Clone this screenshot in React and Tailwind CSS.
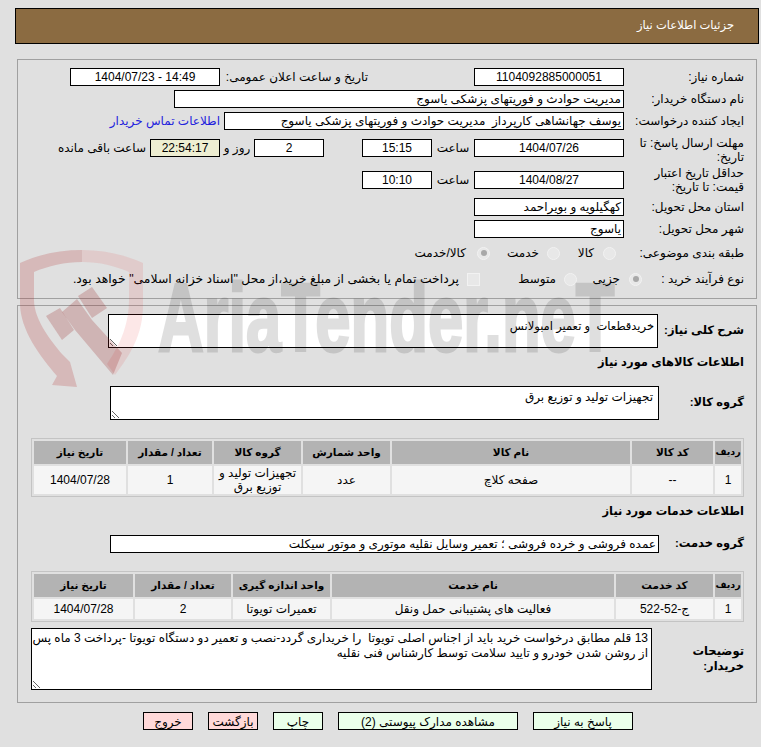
const box = 'h-[18px] border border-black shrink-0 flex items-center';

function Field({ w, children, center, bg = 'bg-white' }) {
  return (
    <div className={`${box} ${w} ${bg} ${center ? 'justify-center' : 'pr-[2px]'} overflow-hidden whitespace-pre`}>
      {children}
    </div>
  );
}

function Radio({ checked }) {
  return (
    <span className="w-[13px] h-[13px] rounded-full bg-[#e8e8e8] border border-[#f2f2f2] shrink-0 flex items-center justify-center">
      {checked && <span className="w-[6px] h-[6px] rounded-full bg-[#a8a8a8]" />}
    </span>
  );
}

function DataTable({ cols, head, row, rowH }) {
  return (
    <table className="table-fixed border-separate [border-spacing:2px] border border-[#c4c4c4] w-[713px] text-center">
      <colgroup>
        {cols.map((c, i) => (
          <col key={i} style={{ width: c }} />
        ))}
      </colgroup>
      <thead>
        <tr className="h-[23px] bg-[#b3b3b3]">
          {head.map((h) => (
            <th key={h} className="p-0 font-bold text-[10.5px] first:text-[9.5px]">{h}</th>
          ))}
        </tr>
      </thead>
      <tbody>
        <tr className={`${rowH} bg-[#f5f5f5]`}>
          {row.map((c, i) => (
            <td key={i} className="p-0 leading-[14px]">{c}</td>
          ))}
        </tr>
      </tbody>
    </table>
  );
}

function Watermark() {
  return (
    <div className="absolute inset-0 pointer-events-none overflow-hidden">
      <svg className="absolute left-0 top-0" width="761" height="747">
        <path
          fill="#b02020"
          fillOpacity="0.2"
          d="M20,263 C40,254 60,250 82,250 L82,262 C65,262 48,266 34,272 L34,300 C34,320 52,342 62,354 L70,362 L77,387 L52,385 L57,376 C40,356 20,330 20,303 Z"
        />
        <path
          fill="#e02020"
          fillOpacity="0.11"
          d="M82,250 C105,250 125,255 143,263 L143,305 C143,335 130,355 115,375 L107,364 C122,342 129,322 129,300 L129,272 C115,266 100,262 82,262 Z"
        />
        <path fill="#901818" fillOpacity="0.22" d="M46,316 L60,308 L74,330 L62,340 Z" />
        <path fill="#901818" fillOpacity="0.22" d="M62,312 L77,299 L92,320 L122,353 L113,375 L75,330 Z" />
        <path fill="#901818" fillOpacity="0.22" d="M78,296 L92,287 L107,308 L92,318 Z" />
      </svg>
      <div className="absolute left-[158px] top-[263px] opacity-[0.12] text-black font-bold text-[96px] leading-[110px] origin-left scale-x-[0.66] whitespace-nowrap [-webkit-text-stroke:3px_black] [font-family:'Liberation_Sans',sans-serif]" dir="ltr">
        AriaTender.neT
      </div>
    </div>
  );
}

export default function App() {
  return (
    <div
      dir="rtl"
      className="relative w-[761px] h-[747px] bg-[#e0e0e0] text-[12px] text-black overflow-hidden [font-family:'Liberation_Sans','DejaVu_Sans',sans-serif]"
    >
      <div className="pt-[8px] pr-[2px] pl-[15px]">
        <div className="h-[36px] border border-black bg-[#8b6b41] text-white flex items-center pr-[24px] text-[11.5px]">
          جزئیات اطلاعات نیاز
        </div>
      </div>

      {/* بخش بالا */}
      <div className="mt-[15px] mr-[4px] ml-[17px] h-[240px] border border-[#a0a0a0] pt-[8px] pr-[12px] flex flex-col">
        <div className="flex items-center h-[18px]">
          <div className="w-[120px] shrink-0">شماره نیاز:</div>
          <Field w="w-[150px]" center>1104092885000051</Field>
          <div className="w-[106px] shrink-0" />
          <div className="w-[148px] shrink-0">تاریخ و ساعت اعلان عمومی:</div>
          <Field w="w-[150px]" center><span dir="ltr">1404/07/23 - 14:49</span></Field>
        </div>
        <div className="flex items-center h-[18px] mt-[4px]">
          <div className="w-[120px] shrink-0">نام دستگاه خریدار:</div>
          <Field w="w-[450px]">مدیریت حوادث و فوریتهای پزشکی یاسوج</Field>
        </div>
        <div className="flex items-center h-[18px] mt-[4px]">
          <div className="w-[120px] shrink-0">ایجاد کننده درخواست:</div>
          <Field w="w-[400px]">یوسف جهانشاهی کارپرداز  مدیریت حوادث و فوریتهای پزشکی یاسوج</Field>
          <a className="mr-[4px] text-[#2222dd] whitespace-nowrap">اطلاعات تماس خریدار</a>
        </div>
        <div className="flex items-center h-[18px] mt-[9px]">
          <div className="w-[120px] shrink-0 leading-[14px] mt-[3px]">مهلت ارسال پاسخ: تا تاریخ:</div>
          <Field w="w-[150px]" center>1404/07/26</Field>
          <div className="w-[42px] shrink-0 text-center">ساعت</div>
          <Field w="w-[70px]" center>15:15</Field>
          <div className="w-[38px] shrink-0" />
          <Field w="w-[70px]" center>2</Field>
          <div className="w-[34px] shrink-0 text-center">روز و</div>
          <Field w="w-[70px]" center bg="bg-[#eeeed2]">22:54:17</Field>
          <div className="mr-[4px] whitespace-nowrap">ساعت باقی مانده</div>
        </div>
        <div className="flex items-center h-[18px] mt-[14px]">
          <div className="w-[120px] shrink-0 leading-[14px]">حداقل تاریخ اعتبار قیمت: تا تاریخ:</div>
          <Field w="w-[150px]" center>1404/08/27</Field>
          <div className="w-[42px] shrink-0 text-center">ساعت</div>
          <Field w="w-[70px]" center>10:10</Field>
        </div>
        <div className="flex items-center h-[18px] mt-[9px]">
          <div className="w-[120px] shrink-0">استان محل تحویل:</div>
          <Field w="w-[150px]">کهگیلویه و بویراحمد</Field>
        </div>
        <div className="flex items-center h-[18px] mt-[4px]">
          <div className="w-[120px] shrink-0">شهر محل تحویل:</div>
          <Field w="w-[150px]">یاسوج</Field>
        </div>
        <div className="flex items-center h-[18px] mt-[6px]">
          <div className="w-[128px] shrink-0">طبقه بندی موضوعی:</div>
          <Radio />
          <div className="w-[43px] shrink-0 pr-[9px]">کالا</div>
          <Radio />
          <div className="w-[57px] shrink-0 pr-[8px]">خدمت</div>
          <Radio checked />
          <div className="pr-[11px]">کالا/خدمت</div>
        </div>
        <div className="flex items-center h-[18px] mt-[8px]">
          <div className="w-[102px] shrink-0">نوع فرآیند خرید :</div>
          <Radio checked />
          <div className="w-[52px] shrink-0 pr-[9px]">جزیی</div>
          <Radio />
          <div className="w-[84px] shrink-0 pr-[8px]">متوسط</div>
          <span className="w-[13px] h-[13px] bg-[#e8e8e8] border border-[#f2f2f2] shrink-0" />
          <div className="pr-[8px] whitespace-nowrap text-[12.4px]">پرداخت تمام یا بخشی از مبلغ خرید،از محل "اسناد خزانه اسلامی" خواهد بود.</div>
        </div>
      </div>

      {/* بخش پایین */}
      <div className="mt-[6px] mr-[4px] ml-[17px] h-[398px] border border-[#a0a0a0] pt-[8px] pr-[12px] flex flex-col">
        <div className="flex items-center">
          <div className="w-[86px] shrink-0 font-bold text-[11.5px] whitespace-nowrap">شرح کلی نیاز:</div>
          <textarea
            readOnly
            className="w-[550px] h-[34px] border border-black bg-white resize rounded-none outline-none px-[3px] py-[2px] text-[11.5px] leading-[18px]"
            defaultValue="خریدقطعات  و تعمیر امبولانس"
          />
        </div>
        <div className="font-bold text-[11.5px] mt-[5px] h-[18px] leading-[18px]">اطلاعات کالاهای مورد نیاز</div>
        <div className="flex items-center mt-[15px]">
          <div className="w-[85px] shrink-0 font-bold text-[11.5px]">گروه کالا:</div>
          <textarea
            readOnly
            className="w-[549px] h-[34px] border border-black bg-white resize rounded-none outline-none px-[5px] py-[1px] leading-[18px]"
            defaultValue="تجهیزات تولید و توزیع برق"
          />
        </div>
        <div className="mt-[18px]">
          <DataTable
            cols={['26px', '81px', '238px', '87px', '87px', '84px', '92px']}
            head={['ردیف', 'کد کالا', 'نام کالا', 'واحد شمارش', 'گروه کالا', 'تعداد / مقدار', 'تاریخ نیاز']}
            row={['1', '--', 'صفحه کلاچ', 'عدد', 'تجهیزات تولید و توزیع برق', '1', '1404/07/28']}
            rowH="h-[28px]"
          />
        </div>
        <div className="font-bold text-[11.5px] mt-[5px] h-[18px] leading-[18px]">اطلاعات خدمات مورد نیاز</div>
        <div className="flex items-center mt-[15px]">
          <div className="w-[85px] shrink-0 font-bold text-[11.5px]">گروه خدمت:</div>
          <Field w="w-[549px]">عمده فروشی و خرده فروشی ؛ تعمیر وسایل نقلیه موتوری و موتور سیکلت</Field>
        </div>
        <div className="mt-[18px]">
          <DataTable
            cols={['26px', '97px', '282px', '97px', '96px', '99px']}
            head={['ردیف', 'کد خدمت', 'نام خدمت', 'واحد اندازه گیری', 'تعداد / مقدار', 'تاریخ نیاز']}
            row={['1', 'ج-52-522', 'فعالیت های پشتیبانی حمل ونقل', 'تعمیرات تویوتا', '2', '1404/07/28']}
            rowH="h-[20px]"
          />
        </div>
        <div className="flex items-center mt-[6px]">
          <div className="w-[92px] shrink-0 font-bold text-[11.5px] leading-[15px] pl-[30px]">توضیحات خریدار:</div>
          <textarea
            readOnly
            className="w-[621px] h-[62px] border border-black bg-white resize rounded-none outline-none pr-[3px] pl-0 py-[2px] text-[12px] leading-[15px]"
            defaultValue="13 قلم مطابق درخواست خرید باید از اجناس اصلی تویوتا  را خریداری گردد-نصب و تعمیر دو دستگاه تویوتا -پرداخت 3 ماه پس از روشن شدن خودرو و تایید سلامت توسط کارشناس فنی نقلیه"
          />
        </div>
      </div>

      {/* دکمه‌ها */}
      <div className="flex gap-[15px] mt-[9px] pr-[128px]">
        <button className="w-[100px] h-[18px] border border-black bg-[#eaffea]">پاسخ به نیاز</button>
        <button className="w-[180px] h-[18px] border border-black bg-[#eaffea]">مشاهده مدارک پیوستی (2)</button>
        <button className="w-[50px] h-[18px] border border-black bg-[#eaffea]">چاپ</button>
        <button className="w-[50px] h-[18px] border border-black bg-[#ffd9d9]">بازگشت</button>
        <button className="w-[50px] h-[18px] border border-black bg-[#ffd9d9]">خروج</button>
      </div>

      <Watermark />
    </div>
  );
}
